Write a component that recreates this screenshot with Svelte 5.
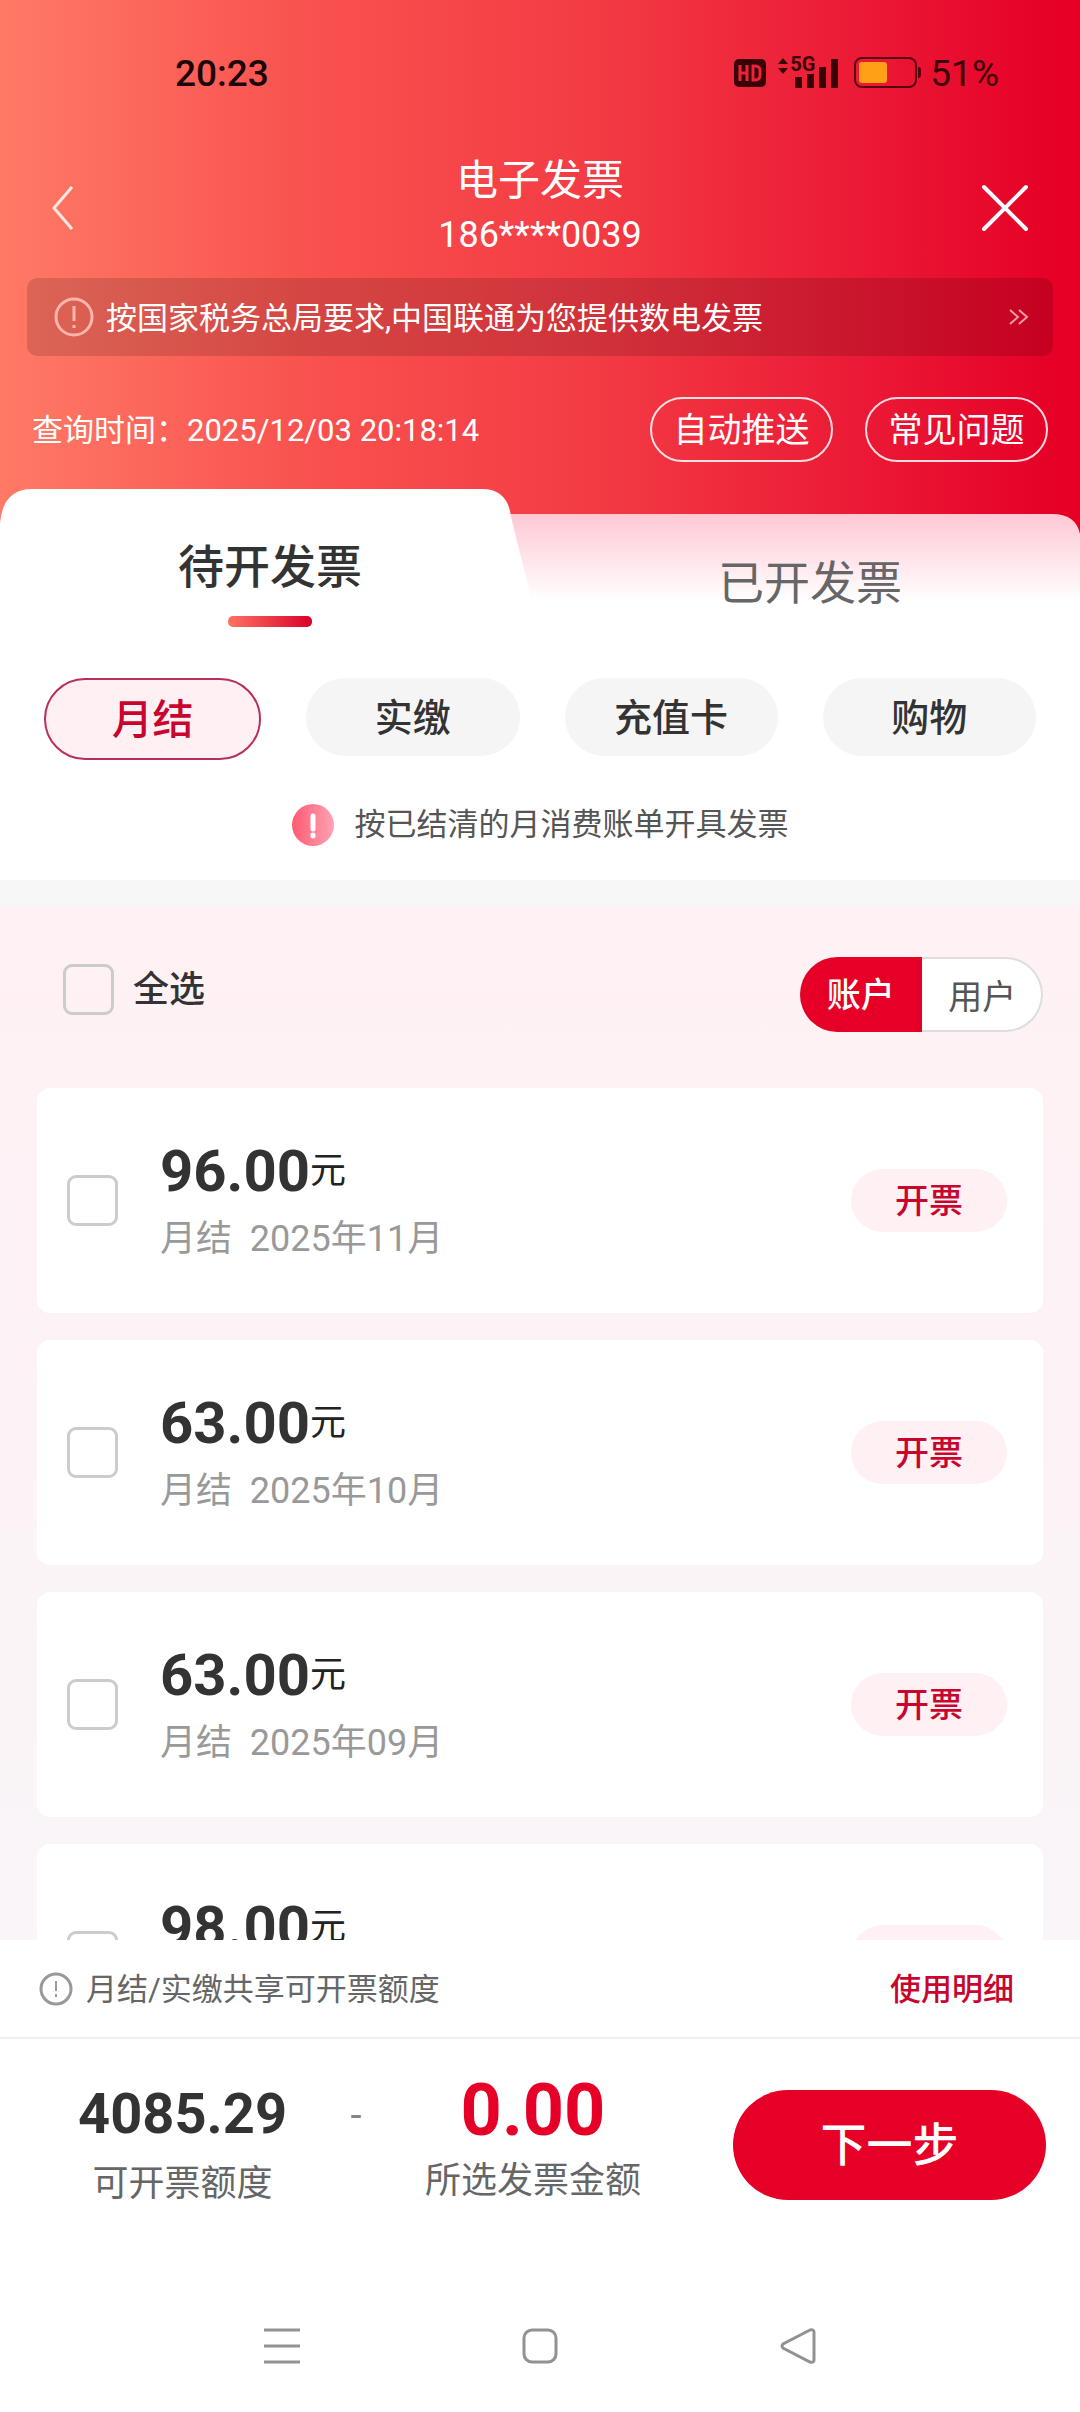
<script>
  const invoices = [
    { id: 1, amount: '96.00', month: '2025年11月' },
    { id: 2, amount: '63.00', month: '2025年10月' },
    { id: 3, amount: '63.00', month: '2025年09月' },
    { id: 4, amount: '98.00', month: '2025年08月' },
  ];
  const kinds = ['月结', '实缴', '充值卡', '购物'];
  const tabs = ['待开发票', '已开发票'];
  const scopes = ['账户', '用户'];

  let activeTab = $state('待开发票');
  let activeKind = $state('月结');
  let scope = $state('账户');
  let selected = $state([]);

  let allSelected = $derived(selected.length === invoices.length);
  let total = $derived(
    invoices
      .filter((item) => selected.includes(item.id))
      .reduce((sum, item) => sum + Number(item.amount), 0)
      .toFixed(2)
  );

  function toggleAll() {
    selected = allSelected ? [] : invoices.map((item) => item.id);
  }
</script>

<div class="page">
  <header class="top">
    <div class="status">
      <span class="clock">20:23</span>
      <div class="status-icons">
        <svg class="hd" width="32" height="28" viewBox="0 0 32 28" aria-hidden="true">
          <rect width="32" height="28" rx="5" fill="#3a0008" />
          <path d="M6 6v16M13 6v16M6 14h7M19 7v14h2q5 0 5-5v-4q0-5-5-5z" fill="none" stroke="#ee2238" stroke-width="3" />
        </svg>
        <div class="signal">
          <svg width="62" height="34" viewBox="0 0 62 34" aria-hidden="true">
            <path d="M0 8l5-6 5 6zM0 12h10l-5 6z" fill="#3a0008" />
            <path d="M17 21h7v11h-7zM29 18h7v14h-7zM41 11h7v21h-7zM53 3h7v29h-7z" fill="#3a0008" />
          </svg>
          <span class="network">5G</span>
        </div>
        <svg class="battery" width="67" height="32" viewBox="0 0 67 32" aria-hidden="true">
          <rect x="1" y="1" width="61" height="29" rx="7" fill="none" stroke="#5a0010" stroke-width="2" />
          <rect x="5" y="5" width="28" height="21" rx="3" fill="#ffa016" />
          <path d="M64 10q3 0 3 3v5q0 3-3 3z" fill="#5a0010" />
        </svg>
        <span class="percent">51%</span>
      </div>
    </div>

    <div class="title-bar">
      <button class="icon-btn" aria-label="返回">
        <svg width="24" height="48" viewBox="0 0 24 48">
          <path d="M22 3L4 24l18 21" fill="none" stroke="#ffe9e5" stroke-width="3" />
        </svg>
      </button>
      <div class="title">
        <h1>电子发票</h1>
        <p>186****0039</p>
      </div>
      <button class="icon-btn" aria-label="关闭">
        <svg width="50" height="48" viewBox="0 0 50 48">
          <path d="M4 3l42 42M46 3L4 45" fill="none" stroke="#fff" stroke-width="4" stroke-linecap="round" />
        </svg>
      </button>
    </div>

    <a class="notice" href="#notice">
      <svg width="40" height="40" viewBox="0 0 40 40" aria-hidden="true">
        <circle cx="20" cy="20" r="18" fill="none" stroke="#fbb5aa" stroke-width="3" />
        <path d="M20 9v15M20 28v3" stroke="#fbb5aa" stroke-width="3" />
      </svg>
      <span>按国家税务总局要求,中国联通为您提供数电发票</span>
      <svg width="20" height="16" viewBox="0 0 20 16" aria-hidden="true">
        <path d="M1 1l8 7-8 7M10 1l8 7-8 7" fill="none" stroke="#f39aa6" stroke-width="2" />
      </svg>
    </a>

    <div class="query">
      <span class="query-time">查询时间：2025/12/03 20:18:14</span>
      <button class="outline-btn">自动推送</button>
      <button class="outline-btn">常见问题</button>
    </div>

    <div class="tabs" role="tablist">
      <svg class="tabs-shape" viewBox="0 0 1080 112" preserveAspectRatio="none" aria-hidden="true">
        <defs>
          <linearGradient id="tab-fade" x1="0" y1="0" x2="0" y2="1">
            <stop offset="0" stop-color="#ffc8d4" />
            <stop offset="1" stop-color="#fff" />
          </linearGradient>
        </defs>
        <path d="M480 25h572q24 0 28 20v67H480z" fill="url(#tab-fade)" />
        <path d="M0 112V34Q3 0 32 0h450q26 0 29 28l21 84z" fill="#fff" />
      </svg>
      {#each tabs as tab}
        <button
          class="tab"
          class:active={tab === activeTab}
          role="tab"
          aria-selected={tab === activeTab}
          onclick={() => (activeTab = tab)}
        >{tab}</button>
      {/each}
    </div>
  </header>

  <section class="filters">
    <div class="chips">
      {#each kinds as kind}
        <button class="chip" class:active={kind === activeKind} onclick={() => (activeKind = kind)}>{kind}</button>
      {/each}
    </div>
    <p class="hint">
      <svg width="42" height="42" viewBox="0 0 42 42" aria-hidden="true">
        <defs>
          <linearGradient id="hint-fill" x1="0" y1="0" x2="1" y2="0">
            <stop offset="0" stop-color="#ff5a72" />
            <stop offset="1" stop-color="#ffa3b3" />
          </linearGradient>
        </defs>
        <circle cx="21" cy="21" r="21" fill="url(#hint-fill)" />
        <path d="M21 12v13M21 31v1" stroke="#fff" stroke-width="5" stroke-linecap="round" />
      </svg>
      <span>按已结清的月消费账单开具发票</span>
    </p>
  </section>

  <main class="list">
    <div class="list-head">
      <label class="select-all">
        <input type="checkbox" checked={allSelected} onchange={toggleAll} />
        <span>全选</span>
      </label>
      <div class="scope">
        {#each scopes as item}
          <button class:active={item === scope} onclick={() => (scope = item)}>{item}</button>
        {/each}
      </div>
    </div>

    <ul class="cards">
      {#each invoices as item (item.id)}
        <li class="card">
          <input type="checkbox" value={item.id} bind:group={selected} aria-label={item.month} />
          <div class="card-text">
            <p class="amount"><strong>{item.amount}</strong><span>元</span></p>
            <p class="period">月结&nbsp; {item.month}</p>
          </div>
          <button class="issue">开票</button>
        </li>
      {/each}
    </ul>
  </main>

  <footer class="bottom">
    <div class="quota">
      <svg width="34" height="34" viewBox="0 0 34 34" aria-hidden="true">
        <circle cx="17" cy="17" r="15" fill="none" stroke="#999" stroke-width="3" />
        <path d="M17 9v10M17 22v3" stroke="#999" stroke-width="2" />
      </svg>
      <span>月结/实缴共享可开票额度</span>
      <a href="#detail">使用明细</a>
    </div>
    <div class="summary">
      <div class="figure available">
        <strong>4085.29</strong>
        <span>可开票额度</span>
      </div>
      <span class="dash">-</span>
      <div class="figure chosen">
        <strong>{total}</strong>
        <span>所选发票金额</span>
      </div>
      <button class="next">下一步</button>
    </div>
    <nav class="system-nav">
      <button aria-label="菜单">
        <svg width="36" height="36" viewBox="0 0 36 36">
          <path d="M0 2h36M0 18h36M0 34h36" stroke="#929292" stroke-width="3" />
        </svg>
      </button>
      <button aria-label="主页">
        <svg width="36" height="36" viewBox="0 0 36 36">
          <rect x="2" y="2" width="32" height="32" rx="8" fill="none" stroke="#929292" stroke-width="3" />
        </svg>
      </button>
      <button aria-label="后退">
        <svg width="36" height="36" viewBox="0 0 36 36">
          <path d="M30 2L3 16q-2 2 0 4l27 14q4 1 4-2V4q0-3-4-2z" fill="none" stroke="#929292" stroke-width="3" />
        </svg>
      </button>
    </nav>
  </footer>
</div>

<style>
  :global(body) {
    margin: 0;
  }

  .page {
    display: flex;
    flex-direction: column;
    height: 100vh;
    background: #fff;
    color: #333;
    font-family: Roboto, 'Noto Sans CJK SC', sans-serif;
    font-size: 31px;
  }

  button {
    margin: 0;
    padding: 0;
    border: 0;
    background: none;
    color: inherit;
    font: inherit;
    cursor: pointer;
  }

  a {
    color: inherit;
    text-decoration: none;
  }

  h1,
  p,
  ul {
    margin: 0;
    padding: 0;
  }

  svg {
    display: block;
    flex: none;
  }

  input[type='checkbox'] {
    appearance: none;
    box-sizing: border-box;
    flex: none;
    width: 51px;
    height: 51px;
    margin: 0;
    border: 3px solid #ccc;
    border-radius: 9px;
  }

  input[type='checkbox']:checked {
    border-color: #e60027;
    background: #e60027;
  }

  .top {
    flex: none;
    background: linear-gradient(90deg, #ff7a66 0%, #f9524f 28%, #f33b44 55%, #ea1533 83%, #e60026 98%);
    color: #fff;
  }

  .status {
    display: flex;
    align-items: center;
    justify-content: space-between;
    height: 146px;
    padding: 0 81px 0 175px;
  }

  .clock {
    color: #1c0508;
    font-size: 37px;
    font-weight: 500;
  }

  .status-icons {
    display: flex;
    align-items: center;
    color: #3a0008;
  }

  .signal {
    position: relative;
    margin: 0 14px 0 12px;
  }

  .network {
    position: absolute;
    top: 0;
    left: 12px;
    font-size: 20px;
    font-weight: 700;
    line-height: 16px;
  }

  .percent {
    margin-left: 9px;
    font-size: 37px;
  }

  .title-bar {
    display: flex;
    align-items: center;
    justify-content: space-between;
    height: 124px;
    padding: 0 50px;
  }

  .icon-btn {
    display: flex;
    width: 50px;
  }

  .icon-btn:last-child {
    justify-content: flex-end;
  }

  .title {
    text-align: center;
    line-height: 55px;
  }

  .title h1 {
    font-size: 42px;
    font-weight: 400;
  }

  .title p {
    font-size: 36px;
  }

  .notice {
    display: flex;
    align-items: center;
    height: 78px;
    margin: 8px 27px 0;
    padding: 0 24px 0 27px;
    border-radius: 10px;
    background: rgba(0, 0, 0, 0.14);
  }

  .notice span {
    flex: 1;
    margin-left: 12px;
    padding-bottom: 4px;
  }

  .query {
    display: flex;
    align-items: center;
    padding: 41px 32px 27px;
  }

  .query-time {
    flex: 1;
    padding-bottom: 4px;
  }

  .outline-btn {
    box-sizing: border-box;
    width: 183px;
    height: 65px;
    margin-left: 32px;
    padding-bottom: 4px;
    border: 2px solid rgba(255, 255, 255, 0.85);
    border-radius: 33px;
    font-size: 34px;
    white-space: nowrap;
  }

  .tabs {
    position: relative;
    display: flex;
    background: linear-gradient(transparent 111px, #fff 111px);
  }

  .tabs-shape {
    position: absolute;
    top: 0;
    left: 0;
    width: 100%;
    height: 112px;
  }

  .tab {
    position: relative;
    display: flex;
    flex: 1;
    flex-direction: column;
    align-items: center;
    height: 150px;
    padding-top: 66px;
    color: #666;
    font-size: 46px;
    line-height: 56px;
  }

  .tab.active {
    padding-top: 50px;
    color: #333;
    font-weight: 500;
  }

  .tab.active::after {
    content: '';
    width: 84px;
    height: 11px;
    margin-top: 21px;
    border-radius: 5px;
    background: linear-gradient(90deg, #ff7262, #d90028);
  }

  .filters {
    flex: none;
    padding: 39px 44px 34px;
    border-bottom: 26px solid #f7f7f7;
    background: #fff;
  }

  .chips {
    display: flex;
    align-items: flex-start;
    gap: 45px;
  }

  .chip {
    flex: 1;
    box-sizing: content-box;
    height: 72px;
    padding-bottom: 6px;
    border-radius: 41px;
    background: #f5f5f5;
    font-size: 38px;
    font-weight: 500;
  }

  .chip.active {
    border: 2px solid #b8305a;
    background: #fff0f3;
    color: #c8052e;
    font-size: 41px;
  }

  .hint {
    display: flex;
    align-items: center;
    justify-content: center;
    gap: 21px;
    margin-top: 44px;
    color: #555;
    line-height: 42px;
  }

  .list {
    flex: 1;
    min-height: 0;
    padding: 51px 37px 0;
    overflow-y: auto;
    scrollbar-width: none;
    background: linear-gradient(#fff1f4, #f9f5f8);
  }

  .list-head {
    display: flex;
    align-items: flex-start;
    justify-content: space-between;
  }

  .select-all {
    display: flex;
    align-items: center;
    gap: 19px;
    height: 64px;
    padding-left: 26px;
    font-size: 36px;
    font-weight: 500;
  }

  .select-all span {
    padding-bottom: 6px;
  }

  .scope {
    display: flex;
    box-sizing: border-box;
    width: 243px;
    height: 75px;
    overflow: hidden;
    border-radius: 38px;
    background: #fff;
    box-shadow: inset 0 0 0 2px #ddd;
    color: #555;
    font-size: 34px;
  }

  .scope button {
    flex: 1;
  }

  .scope .active {
    padding-bottom: 4px;
    background: #e60027;
    color: #fff;
    font-weight: 500;
  }

  .cards {
    display: flex;
    flex-direction: column;
    gap: 27px;
    margin-top: 56px;
    padding-bottom: 27px;
    list-style: none;
  }

  .card {
    display: flex;
    align-items: center;
    box-sizing: border-box;
    height: 225px;
    padding: 0 36px 0 30px;
    border-radius: 13px;
    background: #fff;
  }

  .card-text {
    flex: 1;
    margin-left: 42px;
    font-size: 36px;
  }

  .amount {
    display: flex;
    align-items: center;
    color: #222;
    line-height: 76px;
  }

  .amount strong {
    color: #333;
    font-size: 58px;
    font-weight: 700;
  }

  .period {
    color: #999;
    line-height: 60px;
  }

  .issue {
    width: 156px;
    height: 63px;
    padding-bottom: 4px;
    border-radius: 32px;
    background: #fff0f3;
    color: #c8052e;
    font-size: 34px;
    font-weight: 500;
  }

  .bottom {
    flex: none;
    background: #fff;
  }

  .quota {
    display: flex;
    align-items: center;
    height: 97px;
    padding: 0 66px 0 39px;
    border-bottom: 2px solid #f0f0f0;
    color: #666;
  }

  .quota span {
    flex: 1;
    margin-left: 13px;
    padding-bottom: 4px;
  }

  .quota a {
    padding-bottom: 4px;
    color: #c8052e;
    font-weight: 500;
  }

  .summary {
    display: flex;
    align-items: center;
    height: 212px;
    padding: 0 34px 0 78px;
  }

  .figure {
    display: flex;
    flex-direction: column;
    align-items: center;
    padding-top: 2px;
    color: #666;
    font-size: 36px;
    line-height: 70px;
  }

  .figure strong {
    color: #333;
    font-size: 56px;
  }

  .figure.available {
    padding-top: 8px;
  }

  .figure.chosen strong {
    color: #e60027;
    font-size: 72px;
  }

  .dash {
    flex: 1;
    padding-bottom: 60px;
    color: #888;
    font-size: 40px;
    text-align: center;
  }

  .next {
    width: 313px;
    height: 110px;
    margin-left: 92px;
    padding-bottom: 8px;
    border-radius: 55px;
    background: #e60027;
    color: #fff;
    font-size: 46px;
    font-weight: 500;
  }

  .system-nav {
    display: flex;
    align-items: center;
    justify-content: center;
    gap: 222px;
    height: 132px;
    padding-top: 29px;
  }
</style>
